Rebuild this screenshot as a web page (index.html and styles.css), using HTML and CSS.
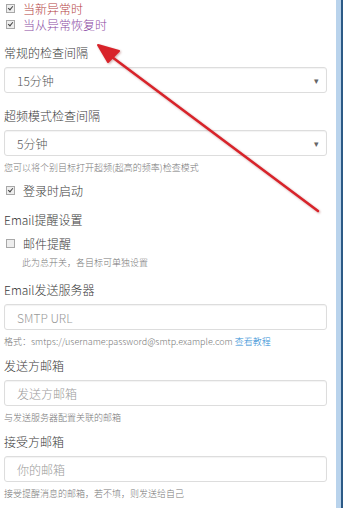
FILE: index.html
```html
<!DOCTYPE html>
<html lang="zh-CN">
<head>
  <meta charset="UTF-8" />
  <title>设置</title>
  <link rel="stylesheet" href="styles.css">
</head>
<body>
  <div class="page">
    <div class="settings">
      <div class="check-row small">
        <span class="box checked"></span><span class="c-red">当新异常时</span>
      </div>
      <div class="check-row small">
        <span class="box checked"></span><span class="c-purple">当从异常恢复时</span>
      </div>

      <div class="group first">
        <div class="label">常规的检查间隔</div>
        <div class="control select">15分钟<span class="caret">▾</span></div>
      </div>

      <div class="group second">
        <div class="label">超频模式检查间隔</div>
        <div class="control select">5分钟<span class="caret">▾</span></div>
        <div class="help">您可以将个别目标打开超频(超高的频率)检查模式</div>
      </div>

      <div class="check-row big login">
        <span class="box checked"></span><span>登录时启动</span>
      </div>

      <div class="label email-title">Email提醒设置</div>
      <div class="check-row big">
        <span class="box"></span><span>邮件提醒</span>
      </div>
      <div class="help indent">此为总开关，各目标可单独设置</div>

      <div class="group server">
        <div class="label">Email发送服务器</div>
        <div class="control placeholder">SMTP URL</div>
        <div class="help">格式：smtps://username:password@smtp.example.com <a href="#">查看教程</a></div>
      </div>

      <div class="group">
        <div class="label">发送方邮箱</div>
        <div class="control placeholder">发送方邮箱</div>
        <div class="help">与发送服务器配置关联的邮箱</div>
      </div>

      <div class="group">
        <div class="label">接受方邮箱</div>
        <div class="control placeholder">你的邮箱</div>
        <div class="help">接受提醒消息的邮箱，若不填，则发送给自己</div>
      </div>
    </div>
    <div class="frame"></div>

    <!-- red arrow drawn over the form -->
    <svg class="arrow" width="348" height="508" viewBox="0 0 348 508">
      <line x1="318" y1="211" x2="112" y2="57" stroke="#d8232a" stroke-width="2.5" stroke-linecap="round"/>
      <polygon points="98,45 119,51 108,62" fill="#d8232a" stroke="#d8232a" stroke-width="2" stroke-linejoin="round"/>
    </svg>
  </div>
</body>
</html>
```

FILE: styles.css
```css
body {
  margin: 0;
  background: #fff;
  font-family: "Noto Sans CJK SC", "Noto Sans", sans-serif;
  font-weight: 300;
  color: #3a3a3a;
}
.page {
  position: relative;
  display: flex;
  width: 348px;
  height: 508px;
  overflow: hidden;
}
.settings {
  width: 323px;
  padding: 0 9px 0 4px;
}
.frame {
  width: 12px;
  border-left: 5px solid #b9d3ec;
  box-sizing: border-box;
  background: linear-gradient(to right, #2c5a86 0, #2c5a86 2px, #fff 2px);
}

.check-row {
  display: flex;
  align-items: center;
  padding-left: 2px;
}
.check-row.small {
  height: 16px;
  font-size: 12px;
}
.check-row.big {
  height: 20px;
  font-size: 12px;
  margin-top: 3px;
}
.check-row.login {
  margin-top: 5px;
}
.box {
  width: 7px;
  height: 7px;
  border: 1px solid #a8a8a8;
  background: #eee;
  margin-right: 8px;
  position: relative;
}
.box.checked::after {
  content: "";
  position: absolute;
  left: 2px;
  top: 0;
  width: 2px;
  height: 4px;
  border: solid #444;
  border-width: 0 1.5px 1.5px 0;
  transform: rotate(40deg);
}
.c-red { color: #b5413f; }
.c-purple { color: #8b4ba3; }

.group {
  margin-top: 7px;
}
.group.first {
  margin-top: 11px;
}
.group.second {
  margin-top: 13px;
}
.group.server {
  margin-top: 10px;
}
.label {
  font-size: 12px;
  line-height: 20px;
  margin-bottom: 4px;
}
.control {
  height: 26px;
  border: 1px solid #ddd;
  border-radius: 3px;
  box-sizing: border-box;
  display: flex;
  align-items: center;
  padding: 0 12px;
  font-size: 12px;
  color: #555;
  box-shadow: inset 0 1px 1px rgba(0, 0, 0, 0.05);
}
.select {
  justify-content: space-between;
}
.caret {
  font-size: 9px;
  color: #666;
  margin-right: -5px;
}
.placeholder {
  color: #9a9a9a;
}
.help {
  font-size: 9px;
  line-height: 14px;
  margin-top: 5px;
  color: #777;
  white-space: nowrap;
}
.help a {
  color: #2a8bd4;
  text-decoration: none;
}
.help.indent {
  padding-left: 18px;
  margin-top: 3px;
}
.email-title {
  margin-top: 10px;
  margin-bottom: 3px;
}

.arrow {
  position: absolute;
  left: 0;
  top: 0;
  pointer-events: none;
  filter: drop-shadow(1px 1px 1px rgba(120, 0, 0, 0.35));
}
```
